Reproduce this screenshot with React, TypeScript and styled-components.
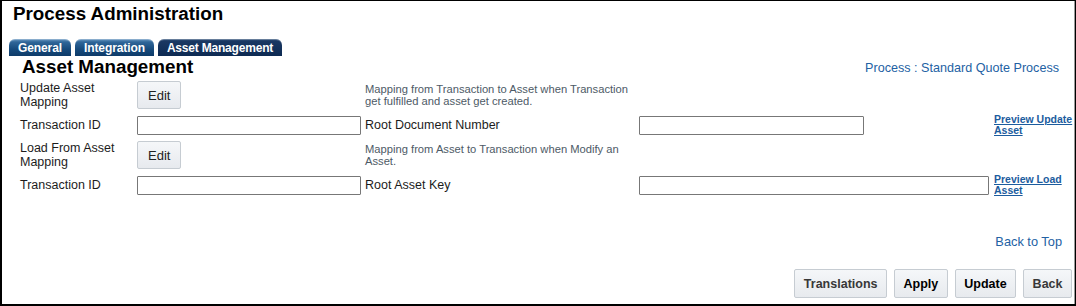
import styled, { createGlobalStyle } from 'styled-components'

const GlobalStyle = createGlobalStyle`
  html, body {
    margin: 0;
    padding: 0;
    background: #fff;
  }
  body {
    font-family: "Liberation Sans", Arial, sans-serif;
  }
`

const tabs = [
  { label: 'General', active: false },
  { label: 'Integration', active: false },
  { label: 'Asset Management', active: true },
]

export default function App() {
  return (
    <>
      <GlobalStyle />
      <Frame>
        <PageTitle>Process Administration</PageTitle>
        <TabBar>
          {tabs.map((t) => (
            <Tab key={t.label} $active={t.active}>
              {t.label}
            </Tab>
          ))}
        </TabBar>
        <SectionHeader>
          <SectionTitle>Asset Management</SectionTitle>
          <ProcessName>Process : Standard Quote Process</ProcessName>
        </SectionHeader>
        <FormGrid>
          <Label>Update Asset Mapping</Label>
          <Cell>
            <EditButton type="button">Edit</EditButton>
          </Cell>
          <Description>
            Mapping from Transaction to Asset when Transaction
            <br />
            get fulfilled and asset get created.
          </Description>
          <Cell />
          <Cell />

          <Label>Transaction ID</Label>
          <Cell>
            <TextInput $width={224} />
          </Cell>
          <Label>Root Document Number</Label>
          <Cell>
            <TextInput $width={225} />
          </Cell>
          <PreviewLink href="#">Preview Update Asset</PreviewLink>

          <Label>Load From Asset Mapping</Label>
          <Cell>
            <EditButton type="button">Edit</EditButton>
          </Cell>
          <Description>
            Mapping from Asset to Transaction when Modify an
            <br />
            Asset.
          </Description>
          <Cell />
          <Cell />

          <Label>Transaction ID</Label>
          <Cell>
            <TextInput $width={224} />
          </Cell>
          <Label>Root Asset Key</Label>
          <Cell>
            <TextInput $width={350} />
          </Cell>
          <PreviewLink href="#">Preview Load Asset</PreviewLink>
        </FormGrid>
        <BackToTop>
          <a href="#">Back to Top</a>
        </BackToTop>
        <ActionBar>
          <ActionButton type="button">Translations</ActionButton>
          <ActionButton type="button" $primary>
            Apply
          </ActionButton>
          <ActionButton type="button" $primary>
            Update
          </ActionButton>
          <ActionButton type="button">Back</ActionButton>
        </ActionBar>
      </Frame>
    </>
  )
}

const Frame = styled.div`
  box-sizing: border-box;
  width: 1076px;
  height: 306px;
  border: 1px solid #000;
  border-left-width: 2px;
  border-bottom-width: 2px;
  box-shadow: inset -1px 0 0 #9a9a9a;
  overflow: hidden;
  color: #1c1c1c;
`

const PageTitle = styled.h1`
  margin: 2px 0 0 11px;
  font-size: 18.8px;
  line-height: 22px;
  font-weight: bold;
  color: #000;
`

const TabBar = styled.div`
  display: flex;
  gap: 4px;
  margin: 14px 0 0 7px;
  height: 17px;
`

const Tab = styled.div<{ $active?: boolean }>`
  display: flex;
  align-items: center;
  padding: 0 9px;
  border-radius: 6px 6px 0 0;
  font-size: 12px;
  font-weight: bold;
  color: #fff;
  letter-spacing: ${(p) => (p.$active ? '-0.2px' : '-0.1px')};
  background: ${(p) =>
    p.$active
      ? 'linear-gradient(#3d5c82 0, #1a3863 2px, #0d2a52 100%)'
      : 'linear-gradient(#6d9bc4 0, #2f6699 3px, #164a7c 60%, #0e3b69 100%)'};
  box-shadow: inset 0 1px 0 rgba(255, 255, 255, 0.25);
`

const SectionHeader = styled.div`
  display: flex;
  align-items: center;
  justify-content: space-between;
  padding: 0 16px 0 20px;
`

const SectionTitle = styled.h2`
  margin: 0;
  font-size: 18.8px;
  line-height: 22px;
  font-weight: bold;
  color: #000;
`

const ProcessName = styled.span`
  font-size: 12.6px;
  color: #2361a3;
  margin-top: 1px;
`

const FormGrid = styled.div`
  display: grid;
  grid-template-columns: 117px 228px 274px 355px 1fr;
  grid-auto-rows: 30px;
  align-items: center;
  margin: 2px 0 0 18px;
`

const Cell = styled.div`
  display: flex;
  align-items: center;
`

const Label = styled.div`
  font-size: 12.5px;
  line-height: 14px;
  color: #1c1c1c;
  padding-right: 6px;
`

const Description = styled.div`
  font-size: 11.2px;
  line-height: 12.5px;
  color: #4d5a66;
`

const EditButton = styled.button`
  box-sizing: border-box;
  height: 28px;
  padding: 0 10px;
  font-family: inherit;
  font-size: 13px;
  color: #222;
  background: linear-gradient(#f5f7f9, #e7eaee);
  border: 1px solid #c6ccd2;
  border-radius: 2px;
`

const TextInput = styled.input<{ $width: number }>`
  box-sizing: border-box;
  width: ${(p) => p.$width}px;
  height: 19px;
  margin: 0;
  border: 1px solid #777;
  border-radius: 1px;
  background: #fff;
`

const PreviewLink = styled.a`
  font-size: 10.5px;
  line-height: 11px;
  font-weight: bold;
  color: #1c5c9e;
  text-decoration: underline;
`

const BackToTop = styled.div`
  display: flex;
  justify-content: flex-end;
  margin-top: 34px;
  padding-right: 13px;
  line-height: 16px;

  a {
    font-size: 12.8px;
    color: #2361a3;
    text-decoration: none;
  }
`

const ActionBar = styled.div`
  display: flex;
  justify-content: flex-end;
  gap: 7px;
  margin-top: 19px;
  padding-right: 3px;
`

const ActionButton = styled.button<{ $primary?: boolean }>`
  box-sizing: border-box;
  height: 29px;
  padding: 0 8.5px;
  font-family: inherit;
  font-size: 12.5px;
  font-weight: bold;
  color: ${(p) => (p.$primary ? '#000' : '#383838')};
  background: linear-gradient(#f5f7f9, #e7eaee);
  border: 1px solid #c6ccd2;
  border-radius: 2px;
`
